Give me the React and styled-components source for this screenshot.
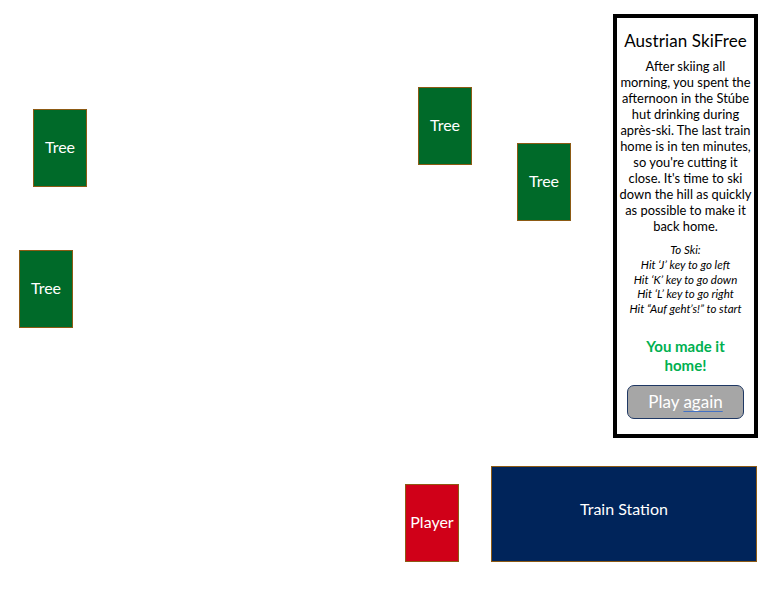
import React from "react";
import styled, { createGlobalStyle } from "styled-components";

const GlobalStyle = createGlobalStyle`
	body {
		margin: 0;
		background: #fff;
		font-family: Lato, "Open Sans", sans-serif;
	}
`;

const sprites = [
	{ kind: "tree", label: "Tree", x: 33, y: 109 },
	{ kind: "tree", label: "Tree", x: 19, y: 250 },
	{ kind: "tree", label: "Tree", x: 418, y: 87 },
	{ kind: "tree", label: "Tree", x: 517, y: 143 },
	{ kind: "player", label: "Player", x: 405, y: 484 },
];

const story = [
	"After skiing all",
	"morning, you spent the",
	"afternoon in the Stúbe",
	"hut drinking during",
	"après-ski. The last train",
	"home is in ten minutes,",
	"so you're cutting it",
	"close. It's time to ski",
	"down the hill as quickly",
	"as possible to make it",
	"back home.",
];

const howTo = [
	"To Ski:",
	"Hit \u2018J\u2019 key to go left",
	"Hit \u2018K\u2019 key to go down",
	"Hit \u2018L\u2019 key to go right",
	"Hit \u201CAuf geht\u2019s!\u201D to start",
];

const colors = {
	tree: "#006a29",
	player: "#d00018",
	station: "#00245a",
};

function App() {
	return (
		<>
			<GlobalStyle />
			<Slope>
				{sprites.map((s, i) => (
					<Sprite key={i} $bg={colors[s.kind]} $x={s.x} $y={s.y}>
						{s.label}
					</Sprite>
				))}
				<Station>Train Station</Station>

				<Panel>
					<Title>Austrian SkiFree</Title>
					<Story>
						{story.map((line) => (
							<Line key={line}>{line}</Line>
						))}
					</Story>
					<HowTo>
						{howTo.map((line) => (
							<Line key={line}>{line}</Line>
						))}
					</HowTo>
					<Result>
						You made it
						<br />
						home!
					</Result>
					<PlayButton type="button">
						Play <Squiggle>again</Squiggle>
					</PlayButton>
				</Panel>
			</Slope>
		</>
	);
}

const Slope = styled.main`
	position: relative;
	width: 770px;
	height: 592px;
	overflow: hidden;
	box-sizing: border-box;
	padding: 14px 12px 0 0;
	display: flex;
	justify-content: flex-end;
	align-items: flex-start;
`;

const Block = styled.div`
	position: absolute;
	box-sizing: border-box;
	border: 1px solid #8c5a14;
	display: flex;
	align-items: center;
	justify-content: center;
	color: #fff;
	font-family: Lato, sans-serif;
`;

const Sprite = styled(Block)`
	left: ${(p) => p.$x}px;
	top: ${(p) => p.$y}px;
	width: 54px;
	height: 78px;
	padding-bottom: 4px;
	background: ${(p) => p.$bg};
	font-size: 16px;
`;

const Station = styled(Block)`
	left: 491px;
	top: 466px;
	width: 266px;
	height: 96px;
	background: ${colors.station};
	font-size: 16px;
	padding-bottom: 12px;
`;

const Panel = styled.aside`
	position: relative;
	width: 145px;
	height: 424px;
	box-sizing: border-box;
	border: 4px solid #000;
	background: #fff;
	padding: 12px 0 0;
	display: flex;
	flex-direction: column;
	align-items: center;
	text-align: center;
	color: #000;
`;

const Title = styled.h1`
	margin: 0;
	font-size: 17px;
	font-weight: 400;
	line-height: 22px;
	letter-spacing: 0.1px;
	white-space: nowrap;
`;

const Story = styled.div`
	margin-top: 6px;
	font-size: 12.9px;
	line-height: 16px;
`;

const Line = styled.div`
	white-space: nowrap;
`;

const HowTo = styled.div`
	margin-top: 9px;
	font-size: 11.5px;
	font-style: italic;
	line-height: 14.75px;
`;

const Result = styled.p`
	margin: 20px 0 0;
	color: #00b050;
	font-size: 15px;
	font-weight: 700;
	line-height: 19px;
`;

const PlayButton = styled.button`
	margin-top: 10px;
	width: 117px;
	height: 34px;
	box-sizing: border-box;
	border: 1px solid #1f3864;
	border-radius: 7px;
	background: #a6a6a6;
	color: #fff;
	font-family: Lato, sans-serif;
	font-size: 17px;
	padding: 0;
	cursor: pointer;
`;

const Squiggle = styled.span`
	text-decoration: underline;
	text-decoration-color: #4472c4;
	text-underline-offset: 3px;
`;

export default App;
